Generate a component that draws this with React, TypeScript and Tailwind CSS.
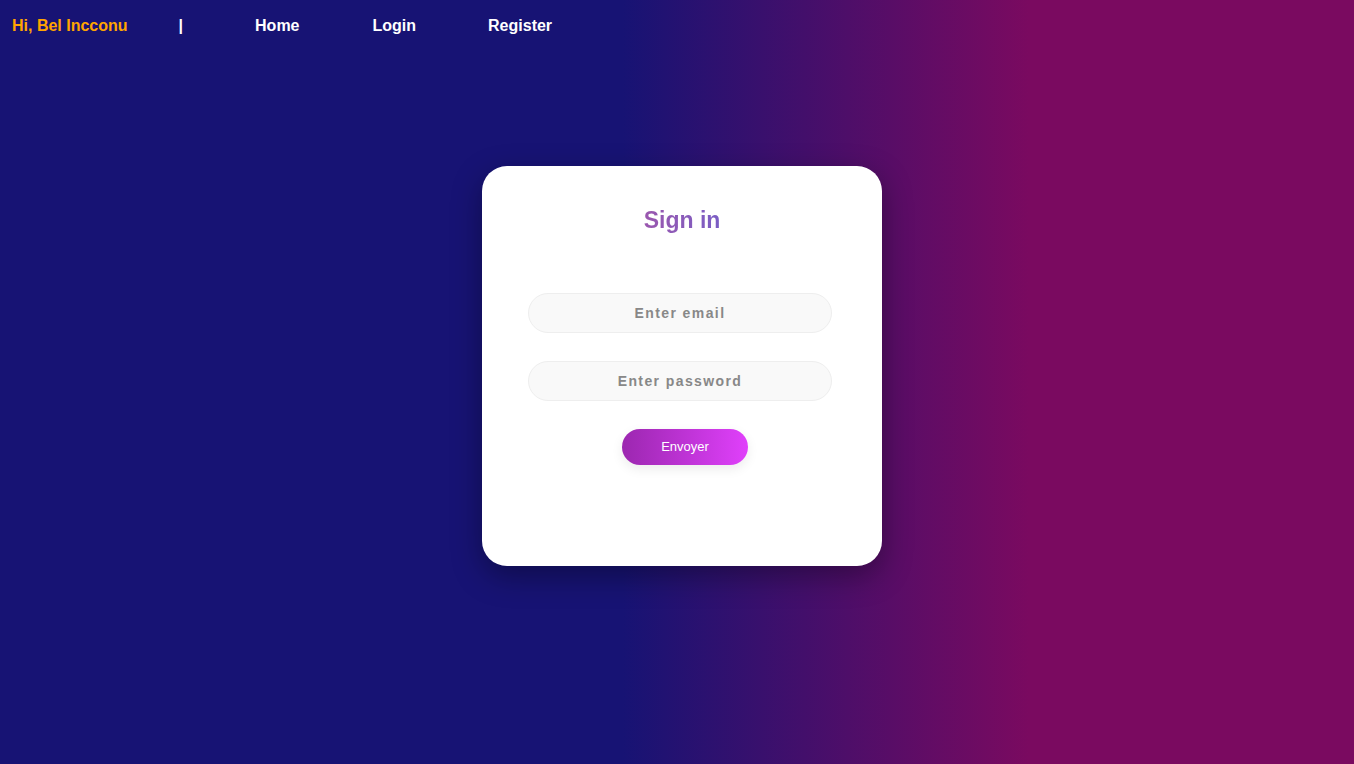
export default function App() {
  return (
    <div className="min-h-screen w-full bg-[linear-gradient(to_right,#171374_46%,#7a0a60_76%)] font-['Liberation_Sans',Arial,sans-serif]">
      <nav className="flex h-[50px] items-center px-3 pt-[2px] text-base font-bold">
        <span className="text-[#ffa500]">Hi, Bel Incconu</span>
        <span className="ml-[51px] text-white">|</span>
        <a href="#" className="ml-[72px] text-white">Home</a>
        <a href="#" className="ml-[73px] text-white">Login</a>
        <a href="#" className="ml-[72px] text-white">Register</a>
      </nav>

      <div className="flex justify-center pt-[116px] pl-[10px]">
        <form className="flex h-[400px] w-[400px] flex-col items-center rounded-[25px] bg-white shadow-[0_10px_30px_rgba(0,0,0,0.35)]">
          <h2 className="mt-[37px] bg-linear-to-r from-[#9a57ae] to-[#7a5dc4] bg-clip-text text-[23px] font-bold text-transparent">
            Sign in
          </h2>
          <input
            type="email"
            placeholder="Enter email"
            className="mt-[55px] mr-[4px] h-10 w-[304px] rounded-full border border-[#eeeeee] bg-[#f9f9f9] text-center text-sm font-bold tracking-[1.4px] outline-none placeholder:text-[#888]"
          />
          <input
            type="password"
            placeholder="Enter password"
            className="mt-7 mr-[4px] h-10 w-[304px] rounded-full border border-[#eeeeee] bg-[#f9f9f9] text-center text-sm font-bold tracking-[1.4px] outline-none placeholder:text-[#888]"
          />
          <button
            type="button"
            className="mt-7 ml-[6px] h-9 w-[126px] rounded-full bg-linear-to-r from-[#9c27b0] to-[#e040fb] text-[13px] text-white shadow-[0_4px_12px_rgba(0,0,0,0.08)]"
          >
            Envoyer
          </button>
        </form>
      </div>
    </div>
  );
}
